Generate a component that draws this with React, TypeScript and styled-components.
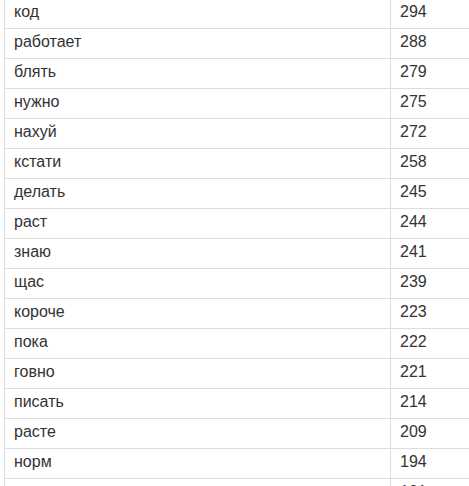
import React from "react";
import styled, { createGlobalStyle } from "styled-components";

const Global = createGlobalStyle`
  html, body { margin: 0; padding: 0; background: #fff; overflow: hidden; }
  body { font-family: "Liberation Sans", Arial, sans-serif; color: #333; }
`;

const Table = styled.div`
  margin-top: -2px;
  margin-left: 4px;
  width: 520px;
  border-left: 1px solid #ddd;
`;

const Row = styled.div`
  display: grid;
  grid-template-columns: 385px 1fr;
  height: 30px;
  box-sizing: border-box;
  border-top: 1px solid #ddd;
`;

const Cell = styled.div<{ $num?: boolean }>`
  padding: 0 9px;
  font-size: 16px;
  line-height: 26px;
  border-left: ${(p) => (p.$num ? "1px solid #ddd" : "none")};
`;

const data: [string, number][] = [
  ["код", 294],
  ["работает", 288],
  ["блять", 279],
  ["нужно", 275],
  ["нахуй", 272],
  ["кстати", 258],
  ["делать", 245],
  ["раст", 244],
  ["знаю", 241],
  ["щас", 239],
  ["короче", 223],
  ["пока", 222],
  ["говно", 221],
  ["писать", 214],
  ["расте", 209],
  ["норм", 194],
  ["тоже", 191],
];

export default function App() {
  return (
    <>
      <Global />
      <Table>
        {data.map(([w, n]) => (
          <Row key={w}>
            <Cell>{w}</Cell>
            <Cell $num>{n}</Cell>
          </Row>
        ))}
      </Table>
    </>
  );
}
